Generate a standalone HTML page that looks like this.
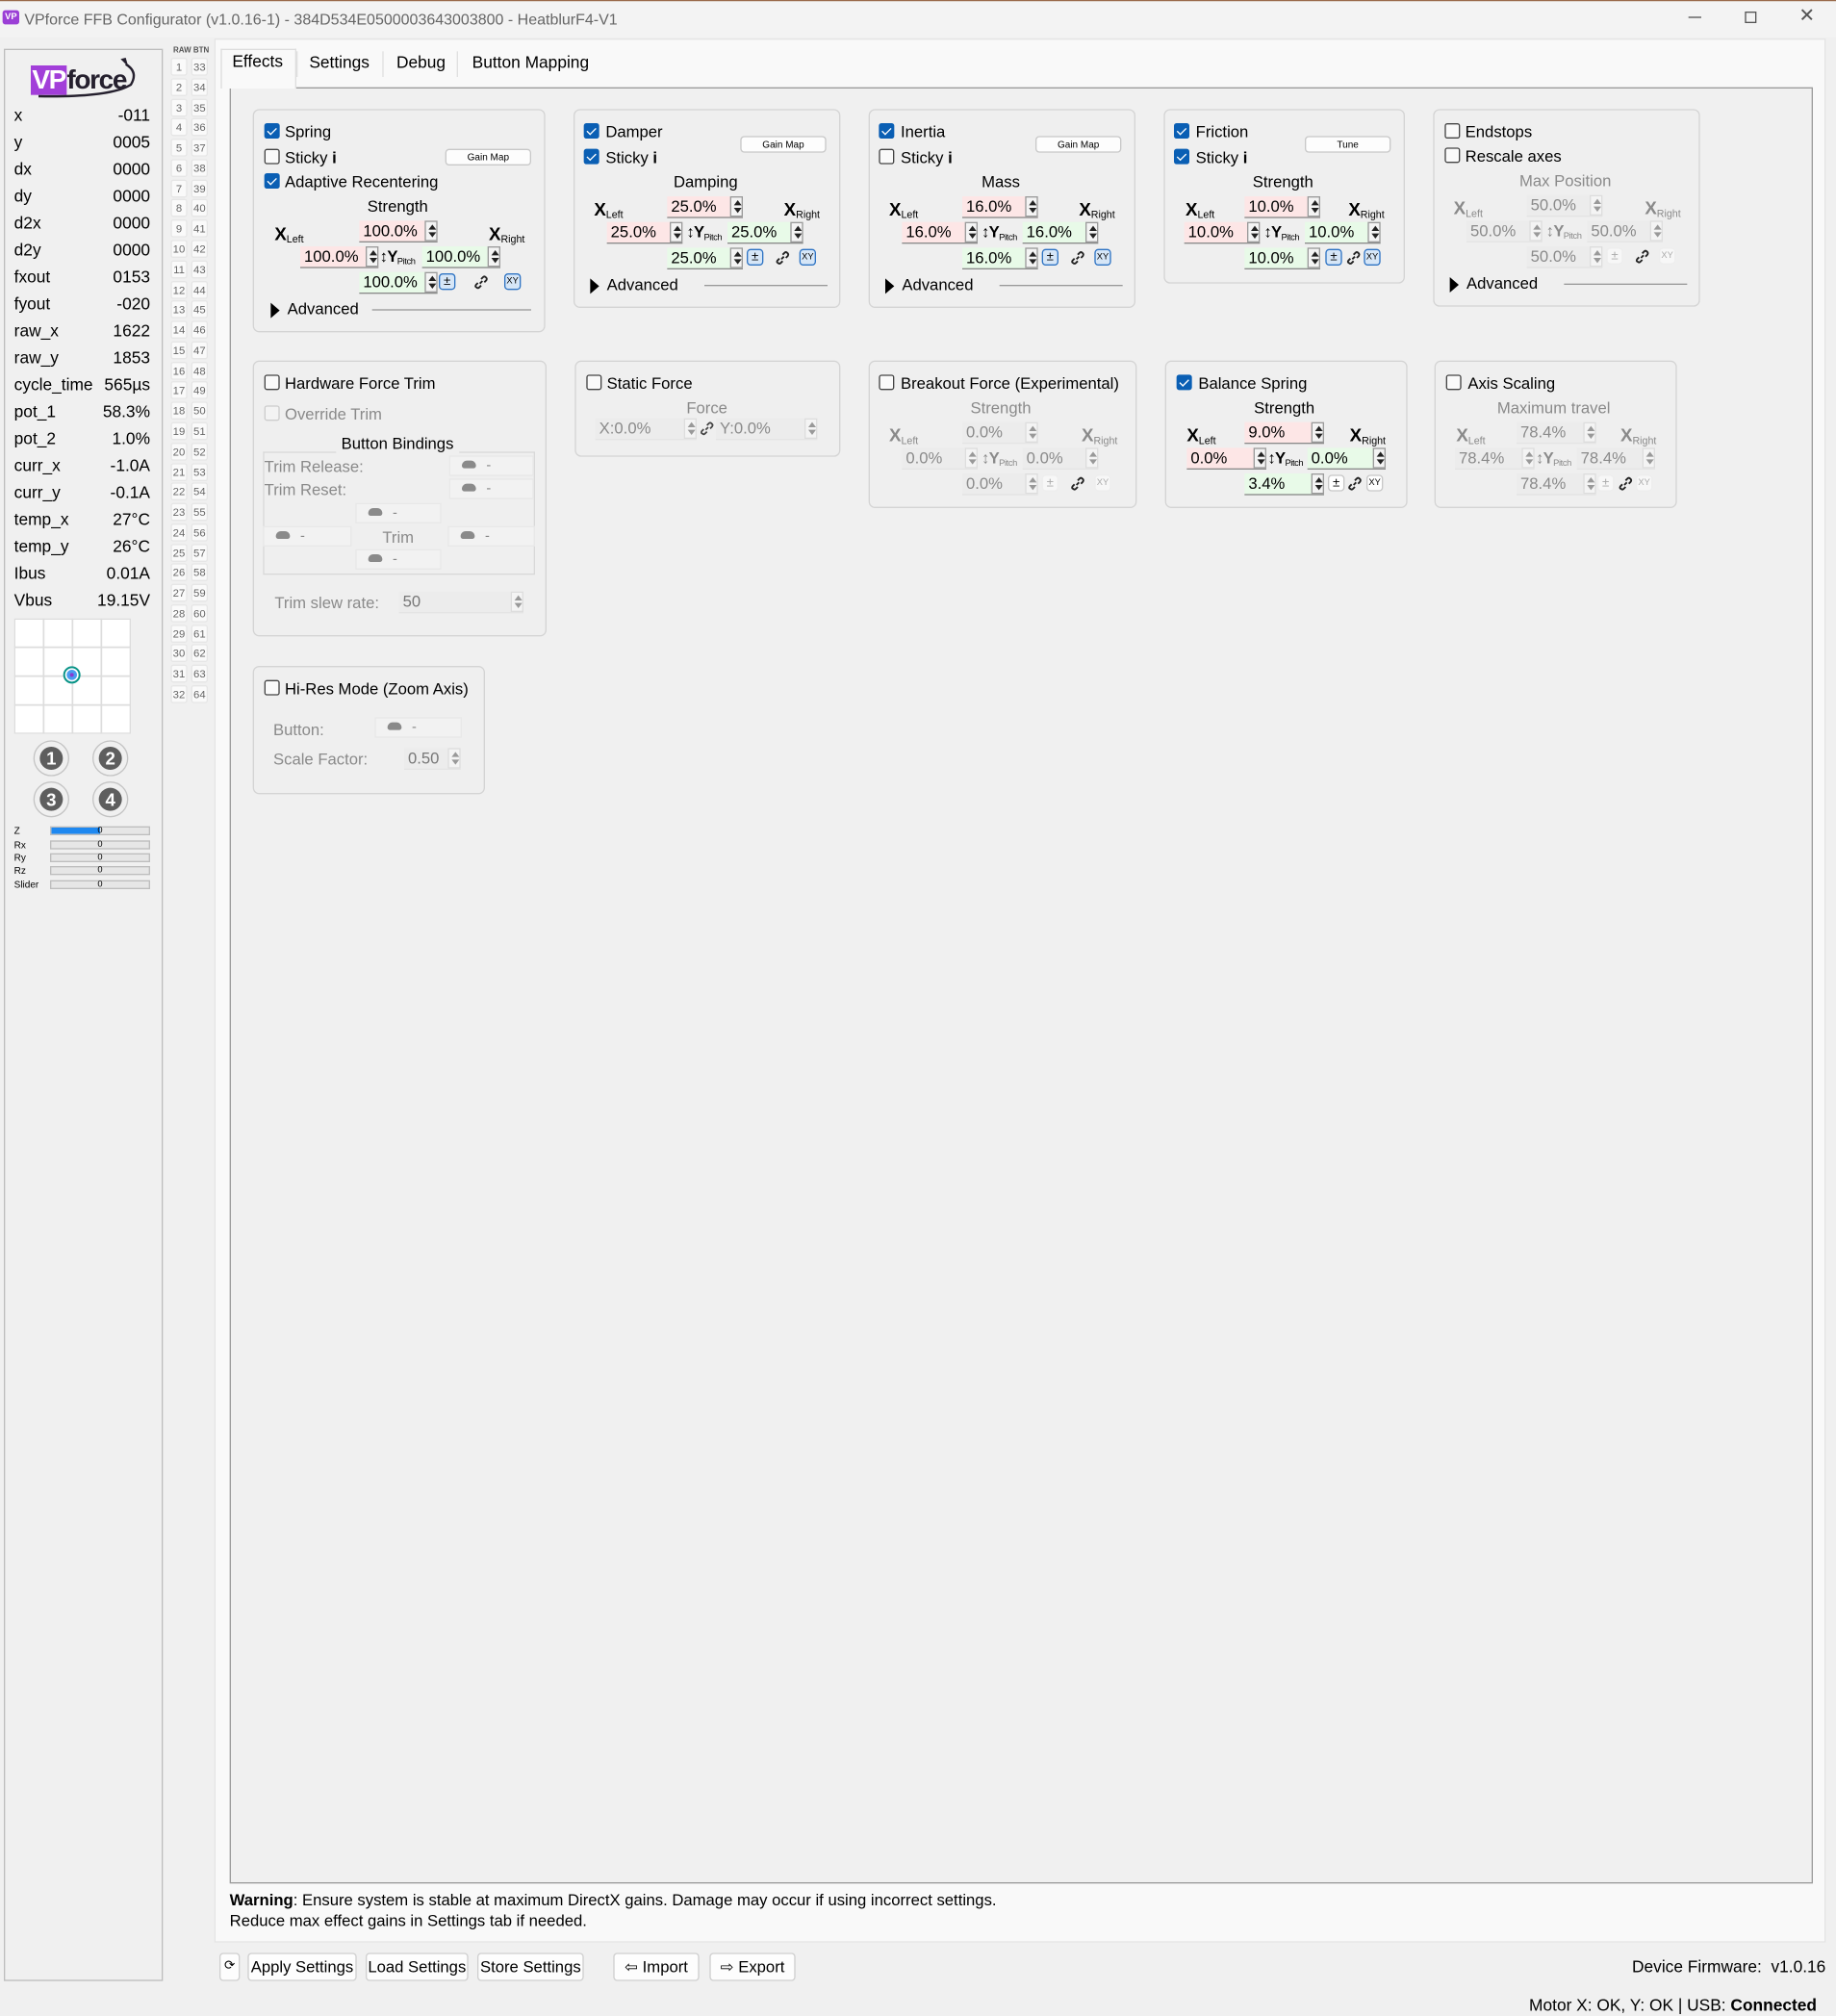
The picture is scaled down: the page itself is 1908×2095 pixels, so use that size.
<!DOCTYPE html>
<html><head><meta charset="utf-8"><style>
*{box-sizing:border-box;margin:0;padding:0}
html,body{width:1908px;height:2091px;overflow:hidden;background:#f0f0f0}
body{font-family:"Liberation Sans",sans-serif;color:#000}
#s{position:absolute;left:0;top:0;width:1431px;height:1568px;transform:scale(1.333333);transform-origin:0 0;font-size:12.5px}
.a{position:absolute;white-space:nowrap;line-height:16px}
.box{position:absolute;border:1px solid #d4d4d4;border-radius:5px;background:#efefef}
.cb{position:absolute;width:12px;height:12px;border:1px solid #444;border-radius:2px;background:#fafafa}
.cb.on{background:#0a5fb4;border-color:#0a5fb4}
.cb.on:after{content:"";position:absolute;left:3px;top:1px;width:3px;height:6px;border:solid #fff;border-width:0 1.3px 1.3px 0;transform:rotate(45deg)}
.cb.dis{border-color:#ccc;background:#f3f3f3}
.mx{position:absolute}
.mx>div{position:absolute;white-space:nowrap;line-height:16px}
.hd{left:53px;width:100px;text-align:center;top:-8px}
.xl{top:13px;font-weight:bold;font-size:14px}
.xl sub{font-weight:normal;font-size:8px;vertical-align:-2px}
.yp sub{font-weight:normal;font-size:7px;vertical-align:-2px;letter-spacing:-0.3px}
.yp{top:31px;font-weight:bold;font-size:12.5px;letter-spacing:-0.5px;z-index:2}
.sp{width:59px;height:17px;padding-left:3px;border-bottom:1px solid #8a8a8a;font-size:12.5px;line-height:17px}
.pk{background:#fde6e6}.gn{background:#e8fae8}
.sp i{position:absolute;right:0;top:0;width:10px;height:16px;border:1px solid #9a9a9a;background:#f4f4f4}
.sp i:before{content:"";position:absolute;left:1.5px;top:2px;border-left:3px solid transparent;border-right:3px solid transparent;border-bottom:4px solid #222}
.sp i:after{content:"";position:absolute;left:1.5px;bottom:2px;border-left:3px solid transparent;border-right:3px solid transparent;border-top:4px solid #222}
.sp.ds{background:#ececec;border-bottom:1px solid #e4e4e4;color:#8a8a8a}
.sp.ds i{border-color:#ddd}
.sp.ds i:before{border-bottom-color:#999}.sp.ds i:after{border-top-color:#999}
.pm,.xy{top:52px;width:13px;height:13px;border:1px solid #2f74c4;background:#d6e6f7;border-radius:3px;text-align:center;font-size:10px;line-height:11px!important}
.xy{font-size:7px}
.w .pm,.w .xy{border-color:#c8c8c8;background:#fff}
.dis .pm,.dis .xy{border-color:#eee;background:#f7f7f7;color:#aaa}
.lk{position:absolute;top:53px;width:12px;height:12px}
.dis{color:#8a8a8a}
.gm{position:absolute;height:13px;border:1px solid #c8c8c8;border-radius:3px;background:#fdfdfd;font-size:7.5px;text-align:center;line-height:11px}
.adv{position:absolute}
.adv .t{position:absolute;left:0;top:3px;border-top:6px solid transparent;border-bottom:6px solid transparent;border-left:7px solid #000}
.adv .l{position:absolute;top:8px;height:1px;background:#999}
.rl{position:absolute;left:11px;width:106px;font-size:13px;line-height:16px}
.rl b{font-weight:normal;position:absolute;right:0}
.nb{position:absolute;width:13px;height:14px;background:#fafafa;border:1px solid #e6e6e6;border-radius:2px;color:#666;font-size:8.5px;text-align:center;line-height:13px}
.btn{position:absolute;top:1522px;height:22px;border:1px solid #cfcfcf;border-radius:3px;background:#fdfdfd;font-size:12.5px;line-height:20px;text-align:center;white-space:nowrap;overflow:hidden}
.bb{position:absolute;height:16px;border:1px solid #e8e8e8;background:#f2f2f2;font-size:11px;color:#888;line-height:14px}
.bb:before{content:"";display:inline-block;width:11px;height:6px;background:#8a8a8a;border-radius:6px 6px 3px 3px;margin:0 8px 0 9px;vertical-align:1px}
.cir{position:absolute;width:28px;height:28px;border:1px solid #c4c4c4;border-radius:50%}
.cir div{position:absolute;left:4px;top:4px;width:18px;height:18px;border-radius:50%;background:#5e5e5e;color:#fff;font-weight:bold;font-size:14px;text-align:center;line-height:18px}
.bar{position:absolute;left:39px;width:78px;height:7px;border:1px solid #bdbdbd;background:#e6e6e6;font-size:7px;line-height:6px;text-align:center}
.bl{position:absolute;left:11px;font-size:7.5px;line-height:8px}
</style></head><body><div id="s">
<div style="position:absolute;left:0;top:0;width:1431px;height:1px;background:#9a6a4a"></div>
<div style="position:absolute;left:0;top:1px;width:1431px;height:28px;background:#f3f3f3"></div>
<div class="a" style="left:2px;top:8px;width:13px;height:11px;background:#9b3fd6;border-radius:2px;color:#fff;font-size:7px;font-weight:bold;line-height:11px;text-align:center">VP</div>
<div class="a" style="left:19px;top:7px;color:#666;font-size:12px">VPforce FFB Configurator (v1.0.16-1) - 384D534E0500003643003800 - HeatblurF4-V1</div>
<div class="a" style="left:1316px;top:13px;width:10px;height:1px;background:#555"></div>
<div class="a" style="left:1360px;top:9px;width:9px;height:9px;border:1px solid #555"></div>
<div class="a" style="left:1402px;top:5px;font-size:15px;color:#555">✕</div>

<div style="position:absolute;left:3px;top:38px;width:124px;height:1506px;border:1px solid #bdbdbd;background:#f0f0f0"></div>
<div class="a" style="left:24px;top:52px;font-size:21px;line-height:22px;font-weight:bold;letter-spacing:-1px"><span style="background:#a23fd9;color:#fff;padding:0 1px">VP</span><span style="color:#25202e">force</span></div>
<svg class="a" style="left:26px;top:44px" width="82" height="34"><path d="M4 31 Q60 32 76 22 Q82 12 72 6" fill="none" stroke="#25202e" stroke-width="1.8"/><path d="M68 2 l6 6 l-2 -7z" fill="#25202e"/></svg>
<div class="rl" style="top:82px">x<b>-011</b></div>
<div class="rl" style="top:103px">y<b>0005</b></div>
<div class="rl" style="top:124px">dx<b>0000</b></div>
<div class="rl" style="top:145px">dy<b>0000</b></div>
<div class="rl" style="top:166px">d2x<b>0000</b></div>
<div class="rl" style="top:187px">d2y<b>0000</b></div>
<div class="rl" style="top:208px">fxout<b>0153</b></div>
<div class="rl" style="top:229px">fyout<b>-020</b></div>
<div class="rl" style="top:250px">raw_x<b>1622</b></div>
<div class="rl" style="top:271px">raw_y<b>1853</b></div>
<div class="rl" style="top:292px">cycle_time<b>565µs</b></div>
<div class="rl" style="top:313px">pot_1<b>58.3%</b></div>
<div class="rl" style="top:334px">pot_2<b>1.0%</b></div>
<div class="rl" style="top:355px">curr_x<b>-1.0A</b></div>
<div class="rl" style="top:376px">curr_y<b>-0.1A</b></div>
<div class="rl" style="top:397px">temp_x<b>27°C</b></div>
<div class="rl" style="top:418px">temp_y<b>26°C</b></div>
<div class="rl" style="top:439px">Ibus<b>0.01A</b></div>
<div class="rl" style="top:460px">Vbus<b>19.15V</b></div>
<svg class="a" style="left:11px;top:482px" width="91" height="90"><rect x="0.5" y="0.5" width="90" height="89" fill="#fff" stroke="#ddd"/><path d="M23 0V90M45.5 0V90M68 0V90M0 22.5H91M0 45H91M0 67.5H91" stroke="#ddd" stroke-width="1.3"/><circle cx="45" cy="44" r="6" fill="#fff" stroke="#0a9488" stroke-width="1.5"/><circle cx="45" cy="44" r="4" fill="#4a9cf0"/><circle cx="45" cy="44" r="1.5" fill="#8a3ad0"/></svg>
<div class="cir" style="left:26px;top:577px"><div>1</div></div>
<div class="cir" style="left:72px;top:577px"><div>2</div></div>
<div class="cir" style="left:26px;top:609px"><div>3</div></div>
<div class="cir" style="left:72px;top:609px"><div>4</div></div>
<div class="bl" style="top:644px">Z</div><div class="bar" style="top:644px;background:linear-gradient(90deg,#1e88f0 50%,#e6e6e6 50%)">0</div>
<div class="bl" style="top:655px">Rx</div><div class="bar" style="top:655px">0</div>
<div class="bl" style="top:665px">Ry</div><div class="bar" style="top:665px">0</div>
<div class="bl" style="top:675px">Rz</div><div class="bar" style="top:675px">0</div>
<div class="bl" style="top:686px">Slider</div><div class="bar" style="top:686px">0</div>

<div class="a" style="left:135px;top:35px;font-size:6px;font-weight:bold;color:#555;line-height:10px">RAW BTN</div>
<div>
<div class="nb" style="left:133px;top:45px">1</div><div class="nb" style="left:149px;top:45px">33</div>
<div class="nb" style="left:133px;top:61px">2</div><div class="nb" style="left:149px;top:61px">34</div>
<div class="nb" style="left:133px;top:77px">3</div><div class="nb" style="left:149px;top:77px">35</div>
<div class="nb" style="left:133px;top:92px">4</div><div class="nb" style="left:149px;top:92px">36</div>
<div class="nb" style="left:133px;top:108px">5</div><div class="nb" style="left:149px;top:108px">37</div>
<div class="nb" style="left:133px;top:124px">6</div><div class="nb" style="left:149px;top:124px">38</div>
<div class="nb" style="left:133px;top:140px">7</div><div class="nb" style="left:149px;top:140px">39</div>
<div class="nb" style="left:133px;top:155px">8</div><div class="nb" style="left:149px;top:155px">40</div>
<div class="nb" style="left:133px;top:171px">9</div><div class="nb" style="left:149px;top:171px">41</div>
<div class="nb" style="left:133px;top:187px">10</div><div class="nb" style="left:149px;top:187px">42</div>
<div class="nb" style="left:133px;top:203px">11</div><div class="nb" style="left:149px;top:203px">43</div>
<div class="nb" style="left:133px;top:219px">12</div><div class="nb" style="left:149px;top:219px">44</div>
<div class="nb" style="left:133px;top:234px">13</div><div class="nb" style="left:149px;top:234px">45</div>
<div class="nb" style="left:133px;top:250px">14</div><div class="nb" style="left:149px;top:250px">46</div>
<div class="nb" style="left:133px;top:266px">15</div><div class="nb" style="left:149px;top:266px">47</div>
<div class="nb" style="left:133px;top:282px">16</div><div class="nb" style="left:149px;top:282px">48</div>
<div class="nb" style="left:133px;top:297px">17</div><div class="nb" style="left:149px;top:297px">49</div>
<div class="nb" style="left:133px;top:313px">18</div><div class="nb" style="left:149px;top:313px">50</div>
<div class="nb" style="left:133px;top:329px">19</div><div class="nb" style="left:149px;top:329px">51</div>
<div class="nb" style="left:133px;top:345px">20</div><div class="nb" style="left:149px;top:345px">52</div>
<div class="nb" style="left:133px;top:361px">21</div><div class="nb" style="left:149px;top:361px">53</div>
<div class="nb" style="left:133px;top:376px">22</div><div class="nb" style="left:149px;top:376px">54</div>
<div class="nb" style="left:133px;top:392px">23</div><div class="nb" style="left:149px;top:392px">55</div>
<div class="nb" style="left:133px;top:408px">24</div><div class="nb" style="left:149px;top:408px">56</div>
<div class="nb" style="left:133px;top:424px">25</div><div class="nb" style="left:149px;top:424px">57</div>
<div class="nb" style="left:133px;top:439px">26</div><div class="nb" style="left:149px;top:439px">58</div>
<div class="nb" style="left:133px;top:455px">27</div><div class="nb" style="left:149px;top:455px">59</div>
<div class="nb" style="left:133px;top:471px">28</div><div class="nb" style="left:149px;top:471px">60</div>
<div class="nb" style="left:133px;top:487px">29</div><div class="nb" style="left:149px;top:487px">61</div>
<div class="nb" style="left:133px;top:502px">30</div><div class="nb" style="left:149px;top:502px">62</div>
<div class="nb" style="left:133px;top:518px">31</div><div class="nb" style="left:149px;top:518px">63</div>
<div class="nb" style="left:133px;top:534px">32</div><div class="nb" style="left:149px;top:534px">64</div>
</div>

<div style="position:absolute;left:167px;top:30px;width:1256px;height:1484px;background:#f9f9f9;border:1px solid #e4e4e4"></div>
<div style="position:absolute;left:172px;top:38px;width:59px;height:31px;background:#f9f9f9;border:1px solid #ddd;border-bottom:none;z-index:2"></div>
<div class="a" style="left:181px;top:40px;font-size:13px;z-index:3">Effects</div>
<div style="position:absolute;left:231px;top:40px;width:3px;height:20px;border-left:1px solid #e0e0e0"></div>
<div class="a" style="left:241px;top:41px;font-size:13px">Settings</div>
<div style="position:absolute;left:298px;top:40px;height:20px;border-left:1px solid #e0e0e0"></div>
<div class="a" style="left:309px;top:41px;font-size:13px">Debug</div>
<div style="position:absolute;left:356px;top:40px;height:20px;border-left:1px solid #e0e0e0"></div>
<div class="a" style="left:368px;top:41px;font-size:13px">Button Mapping</div>
<div style="position:absolute;left:179px;top:68px;width:1234px;height:1400px;border:1px solid #9c9c9c;background:#f0f0f0"></div>

<!-- SPRING -->
<div class="box" style="left:197px;top:85px;width:228px;height:174px"></div>
<div class="cb on" style="left:206px;top:96px"></div><div class="a" style="left:222px;top:95px">Spring</div>
<div class="cb" style="left:206px;top:116px"></div><div class="a" style="left:222px;top:115px">Sticky <b>i</b></div>
<div class="gm" style="left:347px;top:116px;width:67px">Gain Map</div>
<div class="cb on" style="left:206px;top:135px"></div><div class="a" style="left:222px;top:134px">Adaptive Recentering</div>
<div class="mx" style="left:207px;top:161px">
<div class="hd">Strength</div>
<div class="xl" style="left:7px">X<sub>Left</sub></div><div class="xl" style="left:174px">X<sub>Right</sub></div>
<div class="sp pk" style="left:73px;top:11px;width:61px">100.0%<i></i></div>
<div class="sp pk" style="left:27px;top:31px;width:61px">100.0%<i></i></div>
<div class="yp" style="left:89px">↕Y<sub>Pitch</sub></div>
<div class="sp gn" style="left:122px;top:31px;width:61px">100.0%<i></i></div>
<div class="sp gn" style="left:73px;top:51px;width:61px">100.0%<i></i></div>
<div class="pm" style="left:135px">±</div>
<svg class="lk" style="left:162px" viewBox="0 0 12 12"><path d="M5 7 L7 5 M3.5 6.5 L2 8 Q1 9.5 2.5 10 Q3.5 11 4.5 10 L6 8.5 M6 3.5 L7.5 2 Q8.5 1 9.5 2 Q11 3 10 4.5 L8.5 6" stroke="#222" stroke-width="1.4" fill="none"/></svg>
<div class="xy" style="left:186px">XY</div>
</div>
<div class="adv" style="left:211px;top:233px"><div class="t"></div><div class="a" style="left:13px;top:0">Advanced</div><div class="l" style="left:79px;width:124px"></div></div>

<!-- DAMPER -->
<div class="box" style="left:447px;top:85px;width:208px;height:155px"></div>
<div class="cb on" style="left:455px;top:96px"></div><div class="a" style="left:472px;top:95px">Damper</div>
<div class="cb on" style="left:455px;top:116px"></div><div class="a" style="left:472px;top:115px">Sticky <b>i</b></div>
<div class="gm" style="left:577px;top:106px;width:67px">Gain Map</div>
<div class="mx" style="left:447px;top:142px">
<div class="hd">Damping</div>
<div class="xl" style="left:16px">X<sub>Left</sub></div><div class="xl" style="left:164px">X<sub>Right</sub></div>
<div class="sp pk" style="left:73px;top:11px">25.0%<i></i></div>
<div class="sp pk" style="left:26px;top:31px">25.0%<i></i></div>
<div class="yp" style="left:88px">↕Y<sub>Pitch</sub></div>
<div class="sp gn" style="left:120px;top:31px">25.0%<i></i></div>
<div class="sp gn" style="left:73px;top:51px">25.0%<i></i></div>
<div class="pm" style="left:135px">±</div>
<svg class="lk" style="left:157px" viewBox="0 0 12 12"><path d="M5 7 L7 5 M3.5 6.5 L2 8 Q1 9.5 2.5 10 Q3.5 11 4.5 10 L6 8.5 M6 3.5 L7.5 2 Q8.5 1 9.5 2 Q11 3 10 4.5 L8.5 6" stroke="#222" stroke-width="1.4" fill="none"/></svg>
<div class="xy" style="left:176px">XY</div>
</div>
<div class="adv" style="left:460px;top:214px"><div class="t"></div><div class="a" style="left:13px;top:0">Advanced</div><div class="l" style="left:89px;width:96px"></div></div>

<!-- INERTIA -->
<div class="box" style="left:677px;top:85px;width:208px;height:155px"></div>
<div class="cb on" style="left:685px;top:96px"></div><div class="a" style="left:702px;top:95px">Inertia</div>
<div class="cb" style="left:685px;top:116px"></div><div class="a" style="left:702px;top:115px">Sticky <b>i</b></div>
<div class="gm" style="left:807px;top:106px;width:67px">Gain Map</div>
<div class="mx" style="left:677px;top:142px">
<div class="hd">Mass</div>
<div class="xl" style="left:16px">X<sub>Left</sub></div><div class="xl" style="left:164px">X<sub>Right</sub></div>
<div class="sp pk" style="left:73px;top:11px">16.0%<i></i></div>
<div class="sp pk" style="left:26px;top:31px">16.0%<i></i></div>
<div class="yp" style="left:88px">↕Y<sub>Pitch</sub></div>
<div class="sp gn" style="left:120px;top:31px">16.0%<i></i></div>
<div class="sp gn" style="left:73px;top:51px">16.0%<i></i></div>
<div class="pm" style="left:135px">±</div>
<svg class="lk" style="left:157px" viewBox="0 0 12 12"><path d="M5 7 L7 5 M3.5 6.5 L2 8 Q1 9.5 2.5 10 Q3.5 11 4.5 10 L6 8.5 M6 3.5 L7.5 2 Q8.5 1 9.5 2 Q11 3 10 4.5 L8.5 6" stroke="#222" stroke-width="1.4" fill="none"/></svg>
<div class="xy" style="left:176px">XY</div>
</div>
<div class="adv" style="left:690px;top:214px"><div class="t"></div><div class="a" style="left:13px;top:0">Advanced</div><div class="l" style="left:89px;width:96px"></div></div>

<!-- FRICTION -->
<div class="box" style="left:907px;top:85px;width:188px;height:136px"></div>
<div class="cb on" style="left:915px;top:96px"></div><div class="a" style="left:932px;top:95px">Friction</div>
<div class="cb on" style="left:915px;top:116px"></div><div class="a" style="left:932px;top:115px">Sticky <b>i</b></div>
<div class="gm" style="left:1017px;top:106px;width:67px">Tune</div>
<div class="mx" style="left:897px;top:142px">
<div class="hd">Strength</div>
<div class="xl" style="left:27px">X<sub>Left</sub></div><div class="xl" style="left:154px">X<sub>Right</sub></div>
<div class="sp pk" style="left:73px;top:11px">10.0%<i></i></div>
<div class="sp pk" style="left:26px;top:31px">10.0%<i></i></div>
<div class="yp" style="left:88px">↕Y<sub>Pitch</sub></div>
<div class="sp gn" style="left:120px;top:31px">10.0%<i></i></div>
<div class="sp gn" style="left:73px;top:51px">10.0%<i></i></div>
<div class="pm" style="left:136px">±</div>
<svg class="lk" style="left:152px" viewBox="0 0 12 12"><path d="M5 7 L7 5 M3.5 6.5 L2 8 Q1 9.5 2.5 10 Q3.5 11 4.5 10 L6 8.5 M6 3.5 L7.5 2 Q8.5 1 9.5 2 Q11 3 10 4.5 L8.5 6" stroke="#222" stroke-width="1.4" fill="none"/></svg>
<div class="xy" style="left:166px">XY</div>
</div>

<!-- ENDSTOPS -->
<div class="box" style="left:1117px;top:85px;width:208px;height:154px"></div>
<div class="cb" style="left:1126px;top:96px"></div><div class="a" style="left:1142px;top:95px">Endstops</div>
<div class="cb" style="left:1126px;top:115px"></div><div class="a" style="left:1142px;top:114px">Rescale axes</div>
<div class="mx dis" style="left:1117px;top:141px">
<div class="hd">Max Position</div>
<div class="xl" style="left:16px">X<sub>Left</sub></div><div class="xl" style="left:165px">X<sub>Right</sub></div>
<div class="sp ds" style="left:73px;top:11px">50.0%<i></i></div>
<div class="sp ds" style="left:26px;top:31px">50.0%<i></i></div>
<div class="yp" style="left:88px">↕Y<sub>Pitch</sub></div>
<div class="sp ds" style="left:120px;top:31px">50.0%<i></i></div>
<div class="sp ds" style="left:73px;top:51px">50.0%<i></i></div>
<div class="pm" style="left:135px">±</div>
<svg class="lk" style="left:157px" viewBox="0 0 12 12"><path d="M5 7 L7 5 M3.5 6.5 L2 8 Q1 9.5 2.5 10 Q3.5 11 4.5 10 L6 8.5 M6 3.5 L7.5 2 Q8.5 1 9.5 2 Q11 3 10 4.5 L8.5 6" stroke="#222" stroke-width="1.4" fill="none"/></svg>
<div class="xy" style="left:176px">XY</div>
</div>
<div class="adv" style="left:1130px;top:213px"><div class="t"></div><div class="a" style="left:13px;top:0">Advanced</div><div class="l" style="left:89px;width:96px"></div></div>

<!-- HARDWARE FORCE TRIM -->
<div class="box" style="left:197px;top:281px;width:229px;height:215px"></div>
<div class="cb" style="left:206px;top:292px"></div><div class="a" style="left:222px;top:291px">Hardware Force Trim</div>
<div class="cb dis" style="left:206px;top:316px"></div><div class="a" style="left:222px;top:315px;color:#8a8a8a">Override Trim</div>
<div style="position:absolute;left:205px;top:352px;width:212px;height:96px;border:1px solid #d8d8d8"></div>
<div class="a" style="left:262px;top:338px;padding:0 4px;background:#efefef">Button Bindings</div>
<div class="a dis" style="left:206px;top:356px">Trim Release:</div>
<div class="bb" style="left:350px;top:355px;width:66px">-</div>
<div class="a dis" style="left:206px;top:374px">Trim Reset:</div>
<div class="bb" style="left:350px;top:373px;width:66px">-</div>
<div class="bb" style="left:277px;top:392px;width:67px">-</div>
<div class="bb" style="left:205px;top:410px;width:69px">-</div>
<div class="a dis" style="left:298px;top:411px">Trim</div>
<div class="bb" style="left:349px;top:410px;width:68px">-</div>
<div class="bb" style="left:277px;top:428px;width:67px">-</div>
<div class="a dis" style="left:214px;top:462px">Trim slew rate:</div>
<div class="sp ds" style="position:absolute;left:311px;top:461px;width:97px;color:#777">50<i></i></div>

<!-- STATIC FORCE -->
<div class="box" style="left:448px;top:281px;width:207px;height:75px"></div>
<div class="cb" style="left:457px;top:292px"></div><div class="a" style="left:473px;top:291px">Static Force</div>
<div class="a dis" style="left:535px;top:310px">Force</div>
<div class="sp ds" style="position:absolute;left:464px;top:326px;width:79px">X:0.0%<i></i></div>
<svg style="position:absolute;left:545px;top:328px" width="12" height="12" viewBox="0 0 12 12"><path d="M5 7 L7 5 M3.5 6.5 L2 8 Q1 9.5 2.5 10 Q3.5 11 4.5 10 L6 8.5 M6 3.5 L7.5 2 Q8.5 1 9.5 2 Q11 3 10 4.5 L8.5 6" stroke="#444" stroke-width="1.3" fill="none"/></svg>
<div class="sp ds" style="position:absolute;left:558px;top:326px;width:79px">Y:0.0%<i></i></div>

<!-- BREAKOUT -->
<div class="box" style="left:677px;top:281px;width:209px;height:115px"></div>
<div class="cb" style="left:685px;top:292px"></div><div class="a" style="left:702px;top:291px">Breakout Force (Experimental)</div>
<div class="mx dis" style="left:677px;top:318px">
<div class="hd">Strength</div>
<div class="xl" style="left:16px">X<sub>Left</sub></div><div class="xl" style="left:166px">X<sub>Right</sub></div>
<div class="sp ds" style="left:73px;top:11px">0.0%<i></i></div>
<div class="sp ds" style="left:26px;top:31px">0.0%<i></i></div>
<div class="yp" style="left:88px">↕Y<sub>Pitch</sub></div>
<div class="sp ds" style="left:120px;top:31px">0.0%<i></i></div>
<div class="sp ds" style="left:73px;top:51px">0.0%<i></i></div>
<div class="pm" style="left:135px">±</div>
<svg class="lk" style="left:157px" viewBox="0 0 12 12"><path d="M5 7 L7 5 M3.5 6.5 L2 8 Q1 9.5 2.5 10 Q3.5 11 4.5 10 L6 8.5 M6 3.5 L7.5 2 Q8.5 1 9.5 2 Q11 3 10 4.5 L8.5 6" stroke="#222" stroke-width="1.4" fill="none"/></svg>
<div class="xy" style="left:176px">XY</div>
</div>

<!-- BALANCE SPRING -->
<div class="box" style="left:908px;top:281px;width:189px;height:115px"></div>
<div class="cb on" style="left:917px;top:292px"></div><div class="a" style="left:934px;top:291px">Balance Spring</div>
<div class="mx w" style="left:898px;top:318px">
<div class="hd">Strength</div>
<div class="xl" style="left:27px">X<sub>Left</sub></div><div class="xl" style="left:154px">X<sub>Right</sub></div>
<div class="sp pk" style="left:72px;top:11px;width:62px">9.0%<i></i></div>
<div class="sp pk" style="left:27px;top:31px;width:62px">0.0%<i></i></div>
<div class="yp" style="left:90px">↕Y<sub>Pitch</sub></div>
<div class="sp gn" style="left:121px;top:31px;width:61px">0.0%<i></i></div>
<div class="sp gn" style="left:72px;top:51px;width:62px">3.4%<i></i></div>
<div class="pm" style="left:137px">±</div>
<svg class="lk" style="left:152px" viewBox="0 0 12 12"><path d="M5 7 L7 5 M3.5 6.5 L2 8 Q1 9.5 2.5 10 Q3.5 11 4.5 10 L6 8.5 M6 3.5 L7.5 2 Q8.5 1 9.5 2 Q11 3 10 4.5 L8.5 6" stroke="#222" stroke-width="1.4" fill="none"/></svg>
<div class="xy" style="left:167px">XY</div>
</div>

<!-- AXIS SCALING -->
<div class="box" style="left:1118px;top:281px;width:189px;height:115px"></div>
<div class="cb" style="left:1127px;top:292px"></div><div class="a" style="left:1144px;top:291px">Axis Scaling</div>
<div class="mx dis" style="left:1108px;top:318px">
<div class="hd">Maximum travel</div>
<div class="xl" style="left:27px">X<sub>Left</sub></div><div class="xl" style="left:155px">X<sub>Right</sub></div>
<div class="sp ds" style="left:74px;top:11px;width:62px">78.4%<i></i></div>
<div class="sp ds" style="left:26px;top:31px;width:62px">78.4%<i></i></div>
<div class="yp" style="left:89px">↕Y<sub>Pitch</sub></div>
<div class="sp ds" style="left:121px;top:31px;width:61px">78.4%<i></i></div>
<div class="sp ds" style="left:74px;top:51px;width:62px">78.4%<i></i></div>
<div class="pm" style="left:137px">±</div>
<svg class="lk" style="left:153px" viewBox="0 0 12 12"><path d="M5 7 L7 5 M3.5 6.5 L2 8 Q1 9.5 2.5 10 Q3.5 11 4.5 10 L6 8.5 M6 3.5 L7.5 2 Q8.5 1 9.5 2 Q11 3 10 4.5 L8.5 6" stroke="#222" stroke-width="1.4" fill="none"/></svg>
<div class="xy" style="left:167px">XY</div>
</div>

<!-- HI-RES -->
<div class="box" style="left:197px;top:519px;width:181px;height:100px"></div>
<div class="cb" style="left:206px;top:530px"></div><div class="a" style="left:222px;top:529px">Hi-Res Mode (Zoom Axis)</div>
<div class="a dis" style="left:213px;top:561px">Button:</div>
<div class="bb" style="left:292px;top:559px;width:68px">-</div>
<div class="a dis" style="left:213px;top:584px">Scale Factor:</div>
<div class="sp ds" style="position:absolute;left:315px;top:583px;width:44px;color:#777">0.50<i></i></div>

<div class="a" style="left:179px;top:1473px;font-size:12.5px"><b>Warning</b>: Ensure system is stable at maximum DirectX gains. Damage may occur if using incorrect settings.</div>
<div class="a" style="left:179px;top:1489px;font-size:12.5px">Reduce max effect gains in Settings tab if needed.</div>
<div class="btn" style="left:171px;width:16px;font-size:10px">⟳</div>
<div class="btn" style="left:193px;width:85px">Apply Settings</div>
<div class="btn" style="left:285px;width:80px">Load Settings</div>
<div class="btn" style="left:372px;width:83px">Store Settings</div>
<div class="btn" style="left:478px;width:67px">⇦ Import</div>
<div class="btn" style="left:553px;width:67px">⇨ Export</div>
<div class="a" style="right:8px;top:1525px;font-size:13px">Device Firmware:&nbsp; v1.0.16</div>
<div class="a" style="right:15px;top:1555px;font-size:13px">Motor X: OK, Y: OK | USB: <b>Connected</b></div>
</div></body></html>
